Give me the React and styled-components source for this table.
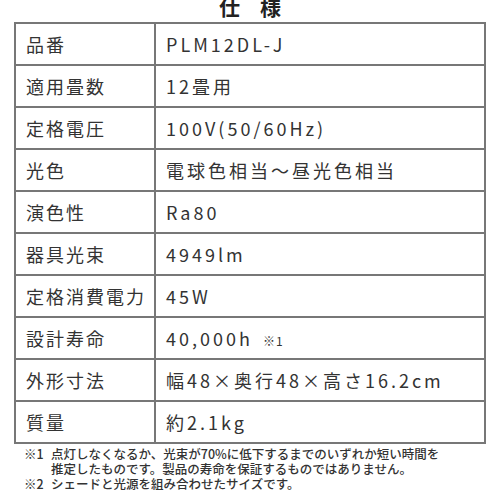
import React from 'react';
import styled, { createGlobalStyle } from 'styled-components';

const GlobalStyle = createGlobalStyle`
    body {
        margin: 0;
        background: #fff;
        font-family: "Noto Sans CJK JP", "Noto Sans", sans-serif;
        color: #333;
    }
`

const specs = [
    { label: '品番', value: 'PLM12DL-J' },
    { label: '適用畳数', value: '12畳用' },
    { label: '定格電圧', value: '100V(50/60Hz)' },
    { label: '光色', value: '電球色相当～昼光色相当' },
    { label: '演色性', value: 'Ra80' },
    { label: '器具光束', value: '4949lm' },
    { label: '定格消費電力', value: '45W' },
    { label: '設計寿命', value: '40,000h', note: '※1' },
    { label: '外形寸法', value: '幅48×奥行48×高さ16.2cm' },
    { label: '質量', value: '約2.1kg' },
]

const App = () => {
    return (
        <Page>
            <GlobalStyle />
            <Title>仕様</Title>
            <SpecTable>
                <tbody>
                    {specs.map(row => (
                        <Row key={row.label}>
                            <Label>{row.label}</Label>
                            <Value>
                                {row.value}
                                {row.note && <Note>{row.note}</Note>}
                            </Value>
                        </Row>
                    ))}
                </tbody>
            </SpecTable>
            <Notes>
                <NoteLine>
                    <Mark>※1</Mark>
                    <span>
                        点灯しなくなるか、光束が70%に低下するまでのいずれか短い時間を<br />
                        推定したものです。製品の寿命を保証するものではありません。
                    </span>
                </NoteLine>
                <NoteLine>
                    <Mark>※2</Mark>
                    <span>シェードと光源を組み合わせたサイズです。</span>
                </NoteLine>
            </Notes>
        </Page>
    )
}

const Page = styled.div`
    width: 500px;
    height: 500px;
    overflow: hidden;
    display: flex;
    flex-direction: column;
    align-items: center;
`

const Title = styled.h1`
    margin: -4px 0 0;
    height: 26px;
    font-size: 21px;
    line-height: 21px;
    font-weight: 700;
    letter-spacing: 20px;
    padding-left: 20px;
    color: #222;
`

const SpecTable = styled.table`
    width: 472px;
    border-collapse: collapse;
    border: 2px solid #777;
`

const Row = styled.tr`
    height: 42px;
    border-bottom: 2px solid #777;
`

const Label = styled.td`
    width: 140px;
    box-sizing: border-box;
    padding: 0 0 0 10px;
    border-right: 2px solid #777;
    font-size: 18px;
    letter-spacing: 2px;
    white-space: nowrap;
`

const Value = styled.td`
    padding: 0 0 0 10px;
    font-size: 18px;
    letter-spacing: 3px;
    white-space: nowrap;
`

const Note = styled.span`
    font-size: 12px;
    letter-spacing: 1px;
    margin-left: 10px;
`

const Notes = styled.div`
    width: 472px;
    padding: 2px 0 0 10px;
    box-sizing: border-box;
    font-size: 12.5px;
    font-weight: 500;
    line-height: 15px;
    color: #333;
    white-space: nowrap;
`

const NoteLine = styled.div`
    display: flex;
    gap: 7px;
`

const Mark = styled.span`
    flex: none;
    width: 20px;
`

export default App
